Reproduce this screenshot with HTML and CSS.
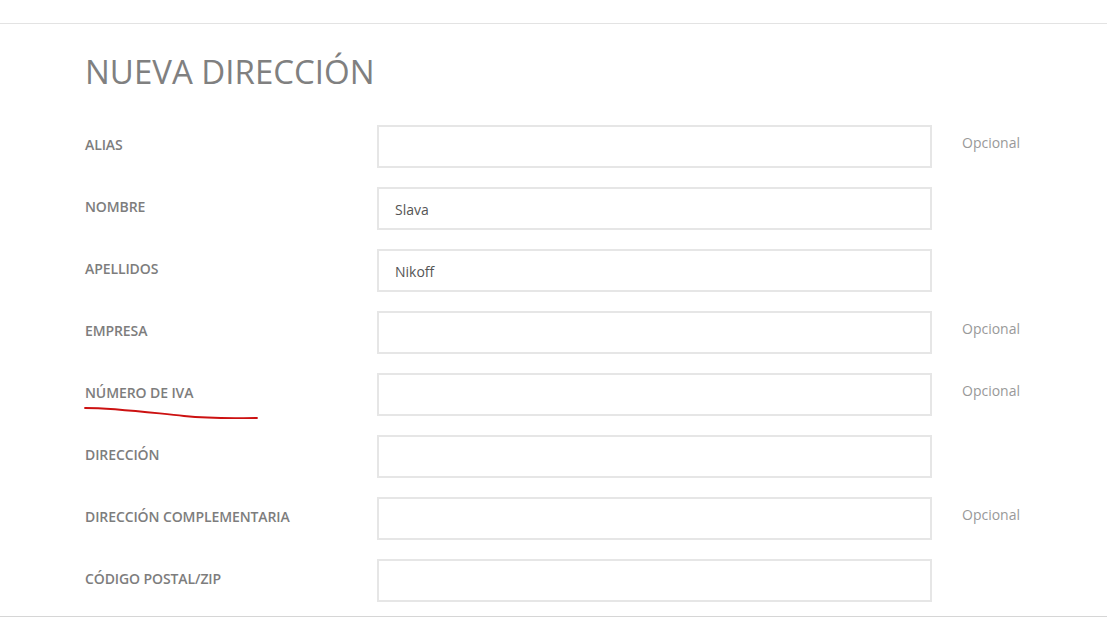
FILE: index.html
```html
<!doctype html>
<html lang="es">
  <head>
    <meta charset="UTF-8" />
    <meta name="viewport" content="width=device-width, initial-scale=1.0" />
    <title>Nueva dirección</title>
    <link rel="stylesheet" href="styles.css">
  </head>
  <body>
    <div class="topbar"></div>

    <section class="address">
      <h1 class="title">Nueva dirección</h1>

      <form class="form">
        <div class="row">
          <label class="label">Alias</label>
          <input class="field" type="text">
          <span class="hint">Opcional</span>
        </div>
        <div class="row">
          <label class="label">Nombre</label>
          <input class="field" type="text" value="Slava">
        </div>
        <div class="row">
          <label class="label">Apellidos</label>
          <input class="field" type="text" value="Nikoff">
        </div>
        <div class="row">
          <label class="label">Empresa</label>
          <input class="field" type="text">
          <span class="hint">Opcional</span>
        </div>
        <div class="row marked">
          <label class="label">Número de IVA</label>
          <input class="field" type="text">
          <span class="hint">Opcional</span>
          <!-- hand-drawn red underline -->
          <svg class="scribble" width="180" height="20" viewBox="0 0 180 20">
            <path d="M1 3 C 30 3, 60 7, 100 11 C 130 14, 150 13, 173 13" fill="none" stroke="#cc1111" stroke-width="1.8" stroke-linecap="round" />
          </svg>
        </div>
        <div class="row">
          <label class="label">Dirección</label>
          <input class="field" type="text">
        </div>
        <div class="row">
          <label class="label">Dirección complementaria</label>
          <input class="field" type="text">
          <span class="hint">Opcional</span>
        </div>
        <div class="row">
          <label class="label">Código postal/ZIP</label>
          <input class="field" type="text">
        </div>
      </form>
    </section>

    <div class="bottombar"></div>
  </body>
</html>
```

FILE: styles.css
```css
body {
  margin: 0;
  background: #fff;
  font-family: "Open Sans", "Liberation Sans", sans-serif;
  color: #7a7a7a;
}
.topbar {
  height: 23px;
  border-bottom: 1px solid #e3e3e3;
}
.address {
  padding: 25px 0 0 85px;
  height: 567px;
  overflow: hidden;
}
.title {
  margin: 0 0 30px;
  font-size: 33px;
  font-weight: 400;
  line-height: 46px;
  text-transform: uppercase;
  color: #808080;
}
.form {
  display: flex;
  flex-direction: column;
  gap: 19px;
}
.row {
  display: flex;
  align-items: flex-start;
}
.marked {
  position: relative;
}
.label {
  width: 292px;
  padding-top: 10px;
  font-size: 14px;
  font-weight: 600;
  line-height: 20px;
  letter-spacing: -0.1px;
  text-transform: uppercase;
  color: #7d7d7d;
}
.field {
  box-sizing: border-box;
  width: 555px;
  height: 43px;
  margin: 0;
  padding: 2px 16px 0;
  border: 2px solid #e6e6e6;
  background: #fff;
  font-family: inherit;
  font-size: 14px;
  color: #555;
  outline: none;
}
.hint {
  margin-left: 30px;
  padding-top: 8px;
  font-size: 14px;
  line-height: 20px;
  color: #999;
}
.scribble {
  position: absolute;
  left: -1px;
  top: 32px;
}
.bottombar {
  border-top: 1px solid #d6d6d6;
}
```
